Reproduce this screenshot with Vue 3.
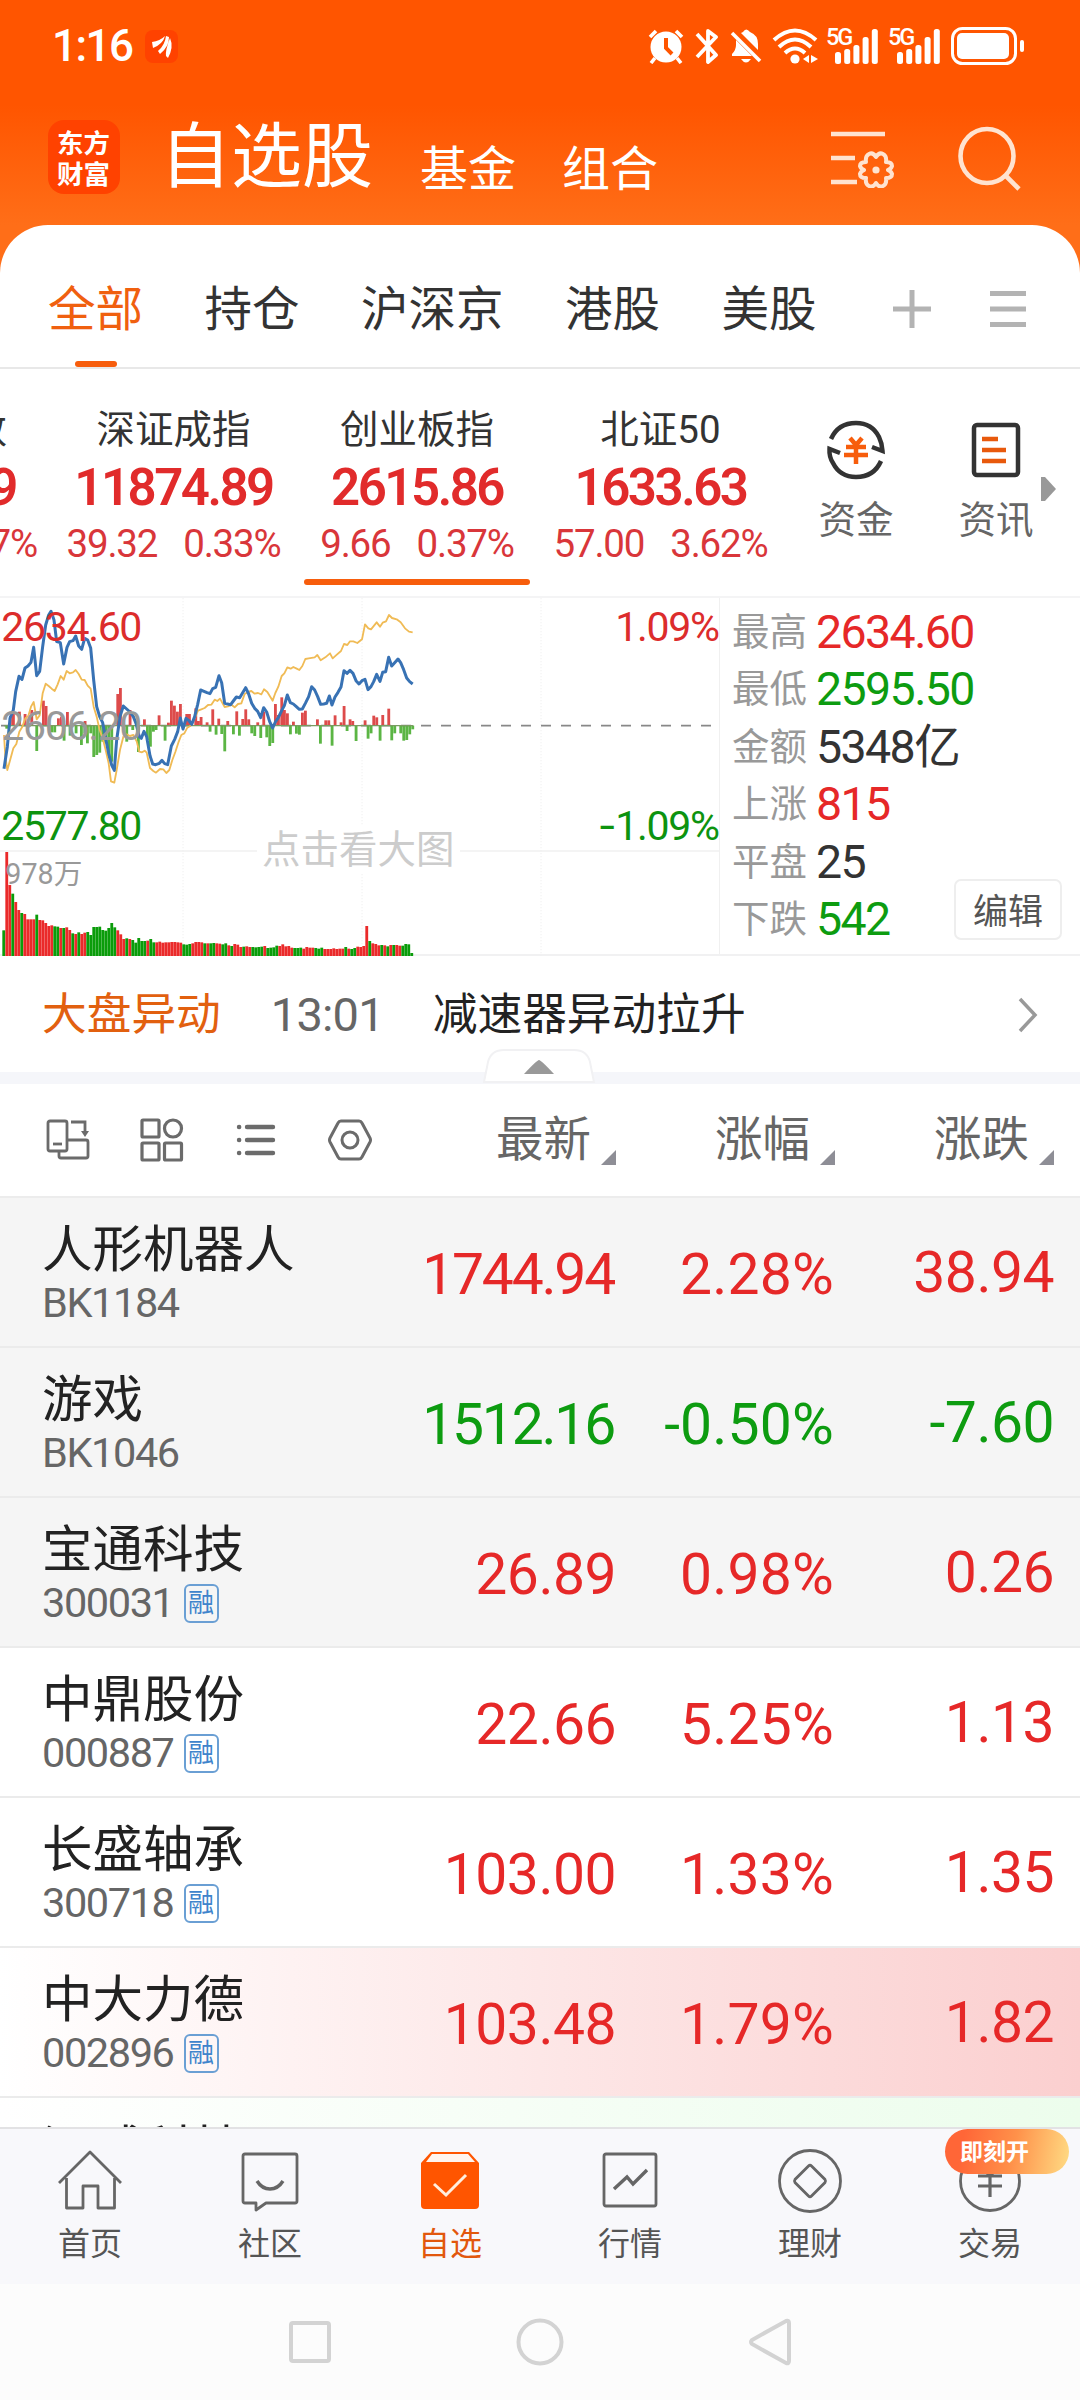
<script setup>
import { ref } from "vue";

const markets = ["全部", "持仓", "沪深京", "港股", "美股"];
const activeMarket = ref("全部");

const indices = [
  { name: "上证指数", value: "3389.09", change: "12.59", percent: "0.37%" },
  { name: "深证成指", value: "11874.89", change: "39.32", percent: "0.33%" },
  { name: "创业板指", value: "2615.86", change: "9.66", percent: "0.37%" },
  { name: "北证50", value: "1633.63", change: "57.00", percent: "3.62%" },
];
const activeIndex = ref("创业板指");

const stats = [
  { label: "最高", value: "2634.60", color: "up" },
  { label: "最低", value: "2595.50", color: "down" },
  { label: "金额", value: "5348亿", color: "" },
  { label: "上涨", value: "815", color: "up" },
  { label: "平盘", value: "25", color: "" },
  { label: "下跌", value: "542", color: "down" },
];

const columns = ["最新", "涨幅", "涨跌"];

const stocks = [
  { name: "人形机器人", code: "BK1184", price: "1744.94", percent: "2.28%", change: "38.94", color: "up", bg: "pinned" },
  { name: "游戏", code: "BK1046", price: "1512.16", percent: "-0.50%", change: "-7.60", color: "down", bg: "pinned" },
  { name: "宝通科技", code: "300031", margin: true, price: "26.89", percent: "0.98%", change: "0.26", color: "up", bg: "pinned" },
  { name: "中鼎股份", code: "000887", margin: true, price: "22.66", percent: "5.25%", change: "1.13", color: "up" },
  { name: "长盛轴承", code: "300718", margin: true, price: "103.00", percent: "1.33%", change: "1.35", color: "up" },
  { name: "中大力德", code: "002896", margin: true, price: "103.48", percent: "1.79%", change: "1.82", color: "up", bg: "flash-up" },
  { name: "汉威科技", code: "", price: "", percent: "", change: "", color: "down", bg: "flash-down" },
];

const signalBars = [12, 15, 19, 27, 35];

// Chart coordinates are in thirds of a pixel
const priceLine =
  "12,536 22,470 30,385 40,360 47,305 57,259 66,268 75,234 84,228 93,217 101,172 110,257 119,244 128,170 137,105 146,75 153,64 162,90 170,155 181,158 191,222 201,172 209,155 219,152 227,138 236,168 245,178 254,145 263,150 272,174 281,270 290,350 299,380 308,398 317,445 326,490 335,525 343,541 350,450 360,380 370,348 380,357 390,366 400,380 408,400 418,440 424,445 432,424 440,440 450,497 458,522 467,524 478,520 486,511 494,521 503,524 514,468 524,448 533,425 541,384 549,417 558,385 567,392 575,403 584,380 593,343 602,300 612,304 621,308 630,311 638,296 647,292 657,257 665,278 674,340 683,342 692,344 700,333 709,321 719,323 728,308 737,293 746,312 755,340 764,355 773,364 782,383 791,353 800,366 809,395 818,414 826,396 835,383 845,362 853,347 862,315 871,338 880,342 889,350 898,358 907,357 916,340 926,320 935,290 944,300 953,320 962,343 971,342 980,340 988,318 996,345 1005,321 1014,307 1023,291 1032,242 1041,250 1050,241 1059,250 1068,272 1077,282 1086,272 1095,268 1104,299 1113,290 1121,275 1130,253 1140,274 1148,247 1157,245 1166,202 1175,228 1184,218 1194,207 1202,218 1211,239 1220,264 1229,275 1238,282";
const averageLine =
  "12,435 16,500 22,540 31,508 40,475 49,462 58,425 67,410 76,385 85,378 93,350 101,336 110,388 119,376 128,310 137,281 146,288 155,296 164,303 173,283 182,258 191,269 200,243 209,250 219,247 227,240 236,252 245,269 254,270 263,287 272,296 281,350 290,380 299,420 308,445 317,480 326,520 333,574 343,578 350,540 360,480 370,440 380,433 390,438 400,435 410,454 418,485 426,487 434,482 440,488 450,534 460,543 468,548 480,537 490,538 499,549 508,540 517,510 526,486 535,458 544,435 553,430 562,413 572,407 584,385 594,362 604,358 614,354 624,345 634,344 644,329 652,333 660,326 674,351 684,349 694,344 704,352 714,342 724,340 734,312 744,306 754,303 764,311 774,309 784,313 792,298 802,306 818,332 826,309 835,290 845,258 853,250 862,232 872,236 880,231 890,236 898,240 907,228 916,207 926,205 944,202 952,195 962,211 976,202 990,190 998,205 1008,196 1023,183 1032,162 1042,165 1050,154 1060,154 1072,159 1086,148 1095,103 1105,115 1113,118 1130,97 1140,110 1148,98 1158,94 1167,75 1176,84 1190,88 1202,97 1215,115 1227,125 1238,127";

const momentum = [
  [31, 378], [40, 368], [58, 365], [75, 372], [95, 360], [130, 332], [138, 348], [175, 385], [184, 380], [202, 366],
  [255, 393], [353, 312], [361, 294], [390, 360], [433, 388], [477, 376], [505, 398], [514, 332], [523, 347],
  [532, 365], [541, 342], [560, 372], [568, 372], [587, 355], [595, 393], [603, 381], [621, 397], [638, 358],
  [656, 386], [683, 393], [710, 364], [728, 387], [737, 358], [746, 388], [773, 397], [791, 365], [826, 342],
  [835, 375], [845, 322], [853, 360], [862, 370], [880, 395], [907, 368], [916, 362], [952, 388], [977, 391],
  [986, 391], [1005, 376], [1023, 397], [1032, 348], [1050, 388], [1058, 393], [1095, 391], [1121, 377],
  [1130, 382], [1148, 375], [1166, 356],
  [20, 416], [110, 483], [155, 427], [164, 427], [192, 452], [210, 437], [228, 430], [244, 465], [254, 430], [262, 460],
  [272, 430], [281, 501], [290, 495], [299, 488], [308, 455], [317, 460], [326, 505], [335, 515], [380, 455], [398, 420],
  [415, 486], [442, 450], [451, 470], [460, 425], [468, 420], [495, 452], [630, 425], [648, 434], [665, 432],
  [674, 484], [700, 433], [718, 437], [755, 430], [764, 438], [782, 444], [800, 442], [809, 468], [818, 459],
  [871, 433], [889, 431], [898, 434], [961, 461], [996, 467], [1041, 423], [1068, 453], [1104, 446], [1113, 430],
  [1140, 452], [1175, 451], [1184, 430], [1202, 430], [1211, 452], [1220, 450], [1229, 433], [1238, 418],
];

const volumeTops = [
  1021, 786, 885, 911, 936, 960, 969, 972, 988, 988, 988, 974, 990, 991, 999, 1008, 1006, 1009, 1010, 1014,
  1014, 1012, 1020, 1030, 1032, 1027, 1032, 1028, 1026, 1035, 1011, 1011, 1010, 1020, 1022, 1014, 999, 1012, 1021, 1033,
  1047, 1045, 1047, 1050, 1058, 1044, 1053, 1053, 1052, 1047, 1057, 1057, 1055, 1058, 1057, 1057, 1056, 1056, 1057, 1058,
  1063, 1064, 1062, 1060, 1056, 1056, 1057, 1060, 1060, 1060, 1059, 1060, 1061, 1063, 1060, 1066, 1068, 1062, 1064, 1071,
  1070, 1069, 1071, 1071, 1072, 1071, 1070, 1068, 1074, 1073, 1072, 1067, 1068, 1063, 1069, 1068, 1073, 1074, 1074, 1073,
  1076, 1071, 1073, 1073, 1074, 1076, 1073, 1077, 1077, 1077, 1075, 1077, 1076, 1076, 1071, 1076, 1077, 1074, 1070, 1071,
  1068, 1008, 1053, 1060, 1062, 1066, 1065, 1066, 1069, 1065, 1065, 1065, 1067, 1067, 1062, 1063, 1089,
];
const volumeColors =
  "grrgrrgrrrrgrrrrrggrgrrgrgrrggggggggggrrrgrgggggrggrrrrrrrrrgggrrrrgrggrrggrgrrrgrrggggrggggrrrrrgggrrrrgggrrrrrrrgrggrrrrgrrrgrgrgrrgggg";

const tools = ["首页", "社区", "自选", "行情", "理财", "交易"];
const activeTool = ref("自选");
</script>

<template>
  <div class="phone">
    <header class="top">
      <div class="status">
        <span class="clock">1:16</span>
        <span class="notice">
          <svg width="33" height="33" viewBox="0 0 33 33" fill="#fff">
            <path d="M7 12Q15 11 20 6Q18 14 8 18Z M13 21Q20 15 21 6L24 7Q24 17 15 24Z M21 26Q20 21 25 8Q29 17 23 28Z" />
          </svg>
        </span>
        <div class="status-icons">
          <svg class="alarm" width="36" height="36" viewBox="0 0 36 36">
            <circle cx="18" cy="19" r="15.5" fill="#fff" />
            <path d="M2 9L8 3M34 9L28 3M7 30L3 35M29 30L33 35" stroke="#fff" stroke-width="3.6" />
            <path d="M18 10V20L24 26" fill="none" stroke="#ff5500" stroke-width="4" />
          </svg>
          <svg class="bluetooth" width="24" height="36" viewBox="0 0 24 36" fill="none" stroke="#fff" stroke-width="3.8">
            <path d="M2 6L21 27L13 34V3L21 9L2 29" stroke-linejoin="round" />
          </svg>
          <svg class="bell" width="32" height="36" viewBox="0 0 32 36" fill="#fff">
            <path d="M6 12L22 28H2V26Q6 22 6 17Z M11 5L13 4Q16 -1 20 4Q28 7 28 16V22Z M11 31H21Q16 38 11 31Z" />
            <path d="M2 5L30 33" stroke="#fff" stroke-width="3.6" />
          </svg>
          <svg class="wifi" width="46" height="36" viewBox="0 0 46 36">
            <path d="M2 12Q23 -7 44 12M7 19Q23 4 39 19M13 25Q23 16 33 25" fill="none" stroke="#fff" stroke-width="4" />
            <circle cx="23" cy="31" r="4.6" fill="#fff" />
            <path d="M37 27V35L31 31Z M39 27L46 31L39 35Z" fill="#fff" />
          </svg>
          <div v-for="n in 2" :key="n" class="signal">
            <span class="net">5G</span>
            <svg width="52" height="36" viewBox="0 0 52 36">
              <rect v-for="(h, i) in signalBars" :key="i" :x="8 + i * 9.2" :y="36 - h" width="6" :height="h" rx="2.5" fill="#fff" />
            </svg>
          </div>
          <svg width="74" height="38" viewBox="0 0 74 38">
            <rect x="1.5" y="1.5" width="63" height="35" rx="10" fill="none" stroke="#fff" stroke-width="3" />
            <rect x="6" y="6" width="52" height="26" rx="5" fill="#fff" />
            <rect x="69" y="13" width="4" height="12" rx="2" fill="#fff" />
          </svg>
        </div>
      </div>
      <div class="title-bar">
        <div class="logo">东方财富</div>
        <h1>自选股</h1>
        <span class="section">基金</span>
        <span class="section">组合</span>
        <svg class="filter" width="64" height="58" viewBox="0 0 64 58" fill="none" stroke="#ffe3d0" stroke-width="4.6">
          <path d="M0 4H54M0 28H24M0 52H26" />
          <path
            d="M45 27Q48 22 52 24Q56 26 55 32Q61 32 61 36Q60 39 57 40Q60 41 61 44Q61 48 55 48Q56 54 52 56Q48 58 45 53Q42 58 38 56Q34 54 35 48Q29 48 29 44Q30 41 33 40Q30 39 29 36Q29 32 35 32Q34 26 38 24Q42 22 45 27Z"
            stroke-width="4"
            stroke-linejoin="round"
          />
          <circle cx="45" cy="40" r="3.6" fill="#ffe3d0" stroke="none" />
        </svg>
        <svg class="search" width="64" height="66" viewBox="0 0 64 66" fill="none" stroke="#ffe3d0" stroke-width="4.6">
          <ellipse cx="29" cy="30" rx="26.5" ry="27" />
          <path d="M47 49L61 63" />
        </svg>
      </div>
    </header>

    <main class="sheet">
      <nav class="markets">
        <a v-for="m in markets" :key="m" :class="{ active: m === activeMarket }" @click="activeMarket = m">{{ m }}</a>
        <svg class="add" width="40" height="40" viewBox="0 0 40 40" stroke="#b3b3b3" stroke-width="5">
          <path d="M1 20H39M20 1V39" />
        </svg>
        <svg class="menu" width="38" height="40" viewBox="0 0 38 40" stroke="#b3b3b3" stroke-width="5">
          <path d="M1 4.5H37M1 20H37M1 35.5H37" />
        </svg>
      </nav>

      <section class="indices">
        <div class="index-list">
          <div
            v-for="item in indices"
            :key="item.name"
            class="index"
            :class="{ active: item.name === activeIndex }"
            @click="activeIndex = item.name"
          >
            <span class="index-name">{{ item.name }}</span>
            <span class="index-value">{{ item.value }}</span>
            <span class="index-change"><i>{{ item.change }}</i><i>{{ item.percent }}</i></span>
          </div>
        </div>
        <div class="shortcut">
          <svg width="60" height="60" viewBox="0 0 60 60" fill="none" stroke="#333" stroke-width="4.5">
            <path d="M5 19Q12 3 30 3Q46 3 53 17Q56 23 56.5 31L46 27M55 41Q48 57 30 57Q14 57 7 43Q3 37 3.5 29L14 33" />
            <path d="M24 18L30 25L36 18M20 27H40M18 35H42M30 25V44" stroke="#f75d0c" />
          </svg>
          <span>资金</span>
        </div>
        <div class="shortcut news">
          <svg width="60" height="60" viewBox="0 0 60 60" fill="none" stroke="#333" stroke-width="4.5">
            <rect x="8" y="5" width="44" height="50" rx="3" />
            <path d="M16 19H32M16 30H40M16 41H40" stroke="#e8590c" />
          </svg>
          <span>资讯</span>
        </div>
        <svg class="more" width="15" height="26" viewBox="0 0 15 26"><path d="M0 1H4L15 13L4 25H0Z" fill="#999" /></svg>
      </section>

      <section class="detail">
        <div class="chart">
          <svg width="720" height="359" viewBox="0 21 2160 1077">
            <g stroke="#f0f0f0" stroke-width="5">
              <path d="M0 783H2160" />
              <path d="M549 24V1097M1086 24V1097M1623 24V1097" stroke-width="3" stroke-dasharray="4 5" />
            </g>
            <path d="M3 407H2140" stroke="#888" stroke-width="5" stroke-dasharray="30 30" />
            <rect
              v-for="([x, y], i) in momentum"
              :key="'m' + i"
              :x="x - 4"
              :y="Math.min(y, 407)"
              width="8.5"
              :height="Math.abs(y - 407)"
              :fill="y < 407 ? '#dd4b4b' : '#5bb544'"
            />
            <path d="M12 407H1240" stroke="#7a9c62" stroke-width="4" />
            <rect
              v-for="(top, i) in volumeTops"
              :key="'v' + i"
              :x="7 + i * 9"
              :y="top"
              width="8.5"
              :height="1098 - top"
              :fill="volumeColors[i] === 'r' ? '#ea2a2a' : '#0a9c0a'"
            />
            <polyline :points="averageLine" fill="none" stroke="#f0bb55" stroke-width="5.5" stroke-linejoin="round" />
            <polyline :points="priceLine" fill="none" stroke="#3872b4" stroke-width="9" stroke-linejoin="round" />
            <text x="4" y="153" class="tick red">2634.60</text>
            <text x="4" y="450" class="tick base">2606.20</text>
            <text x="4" y="750" class="tick green">2577.80</text>
            <text x="2156" y="153" class="tick red" text-anchor="end">1.09%</text>
            <text x="2156" y="750" class="tick green" text-anchor="end"><tspan class="sign">-</tspan>1.09%</text>
            <text x="16" y="882" class="volume">978万</text>
          </svg>
          <span class="hint">点击看大图</span>
        </div>
        <div class="stats">
          <div v-for="s in stats" :key="s.label" class="stat">
            <span>{{ s.label }}</span>
            <b :class="s.color">{{ s.value }}</b>
          </div>
          <button class="edit">编辑</button>
        </div>
      </section>

      <section class="alert">
        <span class="alert-type">大盘异动</span>
        <span class="alert-time">13:01</span>
        <span class="alert-text">减速器异动拉升</span>
        <svg width="20" height="36" viewBox="0 0 20 36"><path d="M2 2L17 18L2 34" fill="none" stroke="#999" stroke-width="3.5" /></svg>
      </section>

      <div class="divider">
        <svg class="handle" width="114" height="36" viewBox="0 0 114 36">
          <path d="M2 34L6 14Q9 2 22 2H92Q105 2 108 14L112 34Z" fill="#fff" stroke="#f1f1f3" stroke-width="2" />
          <path d="M57 12Q59 12 72 26H42Q55 12 57 12Z" fill="#999" />
        </svg>
      </div>

      <section class="table-head">
        <div class="view-icons">
          <svg width="44" height="44" viewBox="0 0 44 44" fill="none" stroke="#6b6b6b" stroke-width="2.8">
            <rect x="2" y="3" width="19" height="30" rx="2" />
            <path d="M7 26H16" />
            <path d="M13 34V38Q13 40 15 40H40Q42 40 42 38V24Q42 22 40 22H22M25 4H39V14" />
            <path d="M35 13H43L39 19Z" fill="#6b6b6b" stroke="none" />
          </svg>
          <svg width="44" height="44" viewBox="0 0 44 44" fill="none" stroke="#6b6b6b" stroke-width="3.2">
            <rect x="2" y="2" width="17" height="17" rx="1" />
            <circle cx="33" cy="10.5" r="8.5" />
            <rect x="2" y="25" width="17" height="17" rx="1" />
            <rect x="24.5" y="25" width="17" height="17" rx="1" />
          </svg>
          <svg width="44" height="44" viewBox="0 0 44 44" stroke="#6b6b6b" stroke-width="4.4" stroke-linecap="round">
            <path d="M13 9H39M13 22H39M13 35H39M5 9H5.2M5 22H5.2M5 35H5.2" />
          </svg>
          <svg width="44" height="44" viewBox="0 0 44 44" fill="none" stroke="#6b6b6b" stroke-width="3">
            <path d="M13 3H31Q33 3 34 5L42 20Q43 22 42 24L34 39Q33 41 31 41H13Q11 41 10 39L2 24Q1 22 2 20L10 5Q11 3 13 3Z" />
            <circle cx="22" cy="22" r="8" />
          </svg>
        </div>
        <span v-for="c in columns" :key="c" class="column">
          {{ c }}<svg width="15" height="15" viewBox="0 0 15 15"><path d="M15 0V15H0Z" fill="#8e8e96" /></svg>
        </span>
      </section>

      <ul class="stocks">
        <li v-for="s in stocks" :key="s.name" class="stock" :class="s.bg">
          <div class="who">
            <span class="name">{{ s.name }}</span>
            <span class="code">{{ s.code }}<em v-if="s.margin">融</em></span>
          </div>
          <span class="num price" :class="[s.color, { tight: s.price.length > 6 }]">{{ s.price }}</span>
          <span class="num percent" :class="s.color">{{ s.percent }}</span>
          <span class="num last" :class="s.color">{{ s.change }}</span>
        </li>
      </ul>
    </main>

    <nav class="tools">
      <a v-for="t in tools" :key="t" :class="{ active: t === activeTool }" @click="activeTool = t">
        <svg width="66" height="66" viewBox="0 0 66 66" fill="none" stroke="#666" stroke-width="2.8">
          <path v-if="t === '首页'" d="M2 35L33 4L64 35M9.5 30V60H26V38H41V60H57.5V30" stroke-linejoin="round" />
          <template v-else-if="t === '社区'">
            <path d="M8 6H58Q60 6 60 8V53Q60 55 58 55H29L19 62V55H8Q6 55 6 53V8Q6 6 8 6Z" stroke-linejoin="round" />
            <path d="M20 33Q25 41 33 41Q41 41 46 33" stroke-width="3.4" />
          </template>
          <template v-else-if="t === '自选'">
            <path d="M4 15L14 4H52L62 15V57Q62 61 58 61H8Q4 61 4 57Z" fill="#ff5500" stroke="none" />
            <path d="M15 6H51L58 14H9Z" fill="#fff5ef" stroke="none" />
            <path d="M17 36L29 47L49 27" stroke="#ffeede" stroke-width="3" />
          </template>
          <template v-else-if="t === '行情'">
            <rect x="7" y="6" width="52" height="52" rx="2" />
            <path d="M17 41L30 29L36 36L50 22" stroke-width="3.4" />
          </template>
          <template v-else-if="t === '理财'">
            <circle cx="33" cy="33" r="30.5" />
            <path d="M31.5 18Q33 16.5 34.5 18L48 31.5Q49 33 48 34.5L34.5 48Q33 49.5 31.5 48L18 34.5Q17 33 18 31.5Z" />
          </template>
          <template v-else>
            <circle cx="33" cy="33" r="29.5" />
            <path d="M22 16L33 28L44 16M21 28H45M21 38H45M33 28V49" stroke-width="3.2" />
          </template>
        </svg>
        <span>{{ t }}</span>
        <i v-if="t === '交易'" class="promo">即刻开</i>
      </a>
    </nav>

    <footer class="system">
      <svg width="48" height="48" viewBox="0 0 48 48"><rect x="5" y="5" width="38" height="38" rx="2" /></svg>
      <svg width="48" height="48" viewBox="0 0 48 48"><circle cx="24" cy="24" r="21.5" /></svg>
      <svg width="48" height="48" viewBox="0 0 48 48"><path d="M40 3Q43 2 43 5V43Q43 46 40 45L6 26Q4 24 6 22Z" /></svg>
    </footer>
  </div>
</template>

<style>
body {
  margin: 0;
}
</style>

<style scoped>
.phone {
  width: 1080px;
  height: 2400px;
  overflow: hidden;
  display: flex;
  flex-direction: column;
  background: #fff;
  color: #333;
  font-family: Roboto, "Noto Sans CJK SC", sans-serif;
}

svg {
  display: block;
  flex: none;
}

i,
em {
  font-style: normal;
}

.up {
  color: #e62828;
}

.down {
  color: #0d9c10;
}

/* header */
.top {
  height: 273px;
  flex: none;
  background: linear-gradient(#ff5500 105px, #ff6e18 225px);
  color: #fff;
}

.status {
  height: 92px;
  box-sizing: border-box;
  padding: 0 55px 0 52px;
  display: flex;
  align-items: center;
}

.clock {
  font-size: 44px;
  font-weight: 500;
  letter-spacing: -1.5px;
}

.notice {
  margin-left: 12px;
  border-radius: 8px;
  background: #ff4200;
}

.status-icons {
  margin-left: auto;
  display: flex;
  align-items: center;
}

.bluetooth {
  margin-left: 11px;
}

.bell {
  margin-left: 11px;
}

.wifi {
  margin: 0 9px 0 10px;
}

.signal {
  position: relative;
  width: 62px;
  height: 36px;
}

.net {
  position: absolute;
  left: -1px;
  top: 0;
  font-size: 23.5px;
  line-height: 19px;
  font-weight: 500;
  letter-spacing: -2px;
}

.title-bar {
  height: 133px;
  padding: 0 58px 0 48px;
  display: flex;
  align-items: center;
}

.logo {
  width: 72px;
  height: 74px;
  box-sizing: border-box;
  margin-top: -3px;
  padding: 6px 9px;
  border-radius: 16px;
  background: #ff4200;
  font-family: "Noto Sans CJK SC", sans-serif;
  font-size: 26.5px;
  font-weight: 700;
  line-height: 31px;
}

h1 {
  margin: -3px 48px 0 40px;
  font-size: 71px;
  line-height: 80px;
  font-weight: 400;
  margin-right: 47px;
}

.section {
  margin: 22px 46px 0 0;
  font-size: 48px;
  line-height: 54px;
}

.filter {
  margin-left: auto;
}

.search {
  margin-left: 63px;
}

/* sheet */
.sheet {
  height: 1902px;
  flex: none;
  margin-top: -48px;
  border-radius: 48px 48px 0 0;
  background: #fff;
  overflow: hidden;
}

.markets {
  height: 144px;
  box-sizing: border-box;
  padding: 0 50px 0 48px;
  border-bottom: 2px solid #e8e8e8;
  display: flex;
  align-items: stretch;
  gap: 61.5px;
}

.markets a {
  position: relative;
  padding-top: 55px;
  font-size: 47.5px;
  line-height: 60px;
}

.markets a.active {
  color: #f0600f;
}

.markets a.active::after {
  content: "";
  position: absolute;
  left: 27px;
  bottom: 0;
  width: 42px;
  height: 6px;
  border-radius: 3px;
  background: #f75d0c;
}

.add {
  align-self: center;
  margin: 25px 0 0 14px;
}

.menu {
  align-self: center;
  margin: 25px 0 0 -5px;
}

.indices {
  height: 227px;
  display: flex;
  border-bottom: 2px solid #f4f4f5;
}

.index-list {
  width: 795px;
  flex: none;
  display: flex;
  gap: 17.5px;
  overflow: hidden;
}

.index {
  position: relative;
  width: 226px;
  flex: none;
  display: flex;
  flex-direction: column;
  align-items: center;
  white-space: nowrap;
}

.index:first-child {
  margin-left: -183px;
}

.index.active::after {
  content: "";
  position: absolute;
  left: 0;
  bottom: 11px;
  width: 226px;
  height: 6px;
  border-radius: 3px;
  background: #f75d0c;
}

.index-name {
  margin-top: 39px;
  font-size: 38.5px;
  line-height: 44px;
}

.index-value {
  margin-top: 1px;
  font-size: 51px;
  line-height: 70px;
  font-weight: 600;
  letter-spacing: -2.5px;
  color: #e12b2b;
}

.index-change {
  display: flex;
  gap: 26px;
  font-size: 38.5px;
  line-height: 42px;
  letter-spacing: -1.2px;
  color: #d9363a;
}

.shortcut {
  width: 122px;
  padding-top: 51px;
  display: flex;
  flex-direction: column;
  align-items: center;
  gap: 18px;
  font-size: 37.5px;
  line-height: 44px;
  color: #666;
}

.news {
  margin-left: 18px;
}

.more {
  margin: 107px 0 0 -16px;
}

.detail {
  height: 358px;
  box-sizing: border-box;
  display: flex;
  border-bottom: 2px solid #f1f1f2;
}

.chart {
  position: relative;
  width: 720px;
  box-sizing: border-box;
  border-right: 1px solid #f0f0f0;
}

.chart svg {
  margin-top: -1px;
}

.tick {
  font-size: 123px;
  letter-spacing: -4px;
}

.sign {
  font-family: Inter;
}

.red {
  fill: #dc2c2c;
}

.green {
  fill: #0d930f;
}

.base {
  fill: #999;
}

.volume {
  font-size: 86px;
  fill: #999;
}

.hint {
  position: absolute;
  left: 257px;
  top: 228px;
  padding: 0 5px;
  background: #fff;
  font-size: 38.5px;
  line-height: 48px;
  color: #ccc;
}

.stats {
  position: relative;
  flex: 1;
  padding: 6px 0 0 12px;
}

.stat {
  height: 57.4px;
  display: flex;
  align-items: flex-start;
  line-height: 56px;
}

.stat span {
  width: 84px;
  font-size: 37.5px;
  color: #999;
}

.stat b {
  font-size: 46.5px;
  font-weight: 400;
  letter-spacing: -1.6px;
}

.edit {
  position: absolute;
  right: 18px;
  top: 281px;
  width: 108px;
  height: 61px;
  padding: 0 0 3px;
  border: 2px solid #eee;
  border-radius: 7px;
  background: #fff;
  font-family: inherit;
  font-size: 35px;
  color: #555;
}

.alert {
  height: 115px;
  padding: 1px 42px 0 42px;
  display: flex;
  align-items: center;
  font-size: 44.7px;
  line-height: 60px;
}

.alert-type {
  color: #e2600f;
}

.alert-time {
  width: 162px;
  margin-left: 50px;
  font-size: 47px;
  letter-spacing: -0.8px;
  color: #666;
}

.alert-text {
  color: #222;
}

.alert svg {
  margin-left: auto;
}

.divider {
  position: relative;
  height: 12px;
  background: #f5f6fa;
}

.handle {
  position: absolute;
  left: 482px;
  top: -24px;
}

.table-head {
  height: 112px;
  padding-right: 26px;
  border-bottom: 2px solid #ececec;
  display: flex;
  align-items: center;
}

.view-icons {
  width: 351px;
  margin-left: 46px;
  margin-right: auto;
  display: flex;
  gap: 50px;
}

.column {
  width: 219px;
  display: flex;
  justify-content: flex-end;
  align-items: flex-end;
  gap: 10px;
  font-size: 47.5px;
  line-height: 56px;
  color: #666;
}

.column svg {
  margin-bottom: 3px;
}

/* stock list */
.stocks {
  margin: 0;
  padding: 0;
  list-style: none;
}

.stock {
  height: 150px;
  box-sizing: border-box;
  padding: 0 26px 0 42px;
  border-bottom: 2px solid #ebebeb;
  display: flex;
}

.pinned {
  background: #f5f5f5;
}

.flash-up {
  background: linear-gradient(90deg, #fff, #fbcfcf);
}

.flash-down {
  background: linear-gradient(90deg, #fff, #ecfdec);
}

.who {
  width: 320px;
  display: flex;
  flex-direction: column;
}

.name {
  margin-top: 22px;
  font-size: 50.5px;
  line-height: 60px;
  color: #222;
}

.code {
  display: flex;
  align-items: center;
  height: 44px;
  font-size: 41.5px;
  letter-spacing: -1.4px;
  color: #666;
}

.code em {
  width: 31px;
  height: 35px;
  margin: 2px 0 0 10px;
  border: 2px solid #6a9fd4;
  border-radius: 6px;
  font-size: 26px;
  line-height: 35px;
  letter-spacing: 0;
  text-align: center;
  color: #3f84cc;
}

.num {
  flex: 1;
  font-size: 57px;
  line-height: 154px;
  letter-spacing: -0.5px;
  text-align: right;
}

.price {
  flex: none;
  width: 254px;
}

.tight {
  width: 252px;
  margin-right: 2px;
  letter-spacing: -2.2px;
}

.percent {
  flex: none;
  width: 218px;
  letter-spacing: 0.2px;
}

.last {
  line-height: 149px;
}

/* bottom bars */
.tools {
  height: 157px;
  box-sizing: border-box;
  flex: none;
  border-top: 2px solid #e2e2e4;
  background: #f8f8fb;
  display: flex;
}

.tools a {
  position: relative;
  flex: 1;
  padding-top: 19px;
  display: flex;
  flex-direction: column;
  align-items: center;
  gap: 8px;
  font-size: 32px;
  line-height: 44px;
  color: #555;
}

.tools a.active {
  color: #e2570d;
}

.promo {
  position: absolute;
  left: 45px;
  top: 0;
  width: 124px;
  height: 45px;
  box-sizing: border-box;
  padding-left: 15px;
  border-radius: 23px;
  background: linear-gradient(100deg, #ff6637 15%, #ff914a 55%, #ffdc84);
  font-size: 23px;
  font-weight: 700;
  line-height: 47px;
  color: #fff;
}

.system {
  flex: 1;
  background: #fcfcfc;
  display: flex;
  align-items: center;
  justify-content: center;
  gap: 182px;
}

.system svg {
  fill: none;
  stroke: #d3d3d3;
  stroke-width: 4;
}
</style>
